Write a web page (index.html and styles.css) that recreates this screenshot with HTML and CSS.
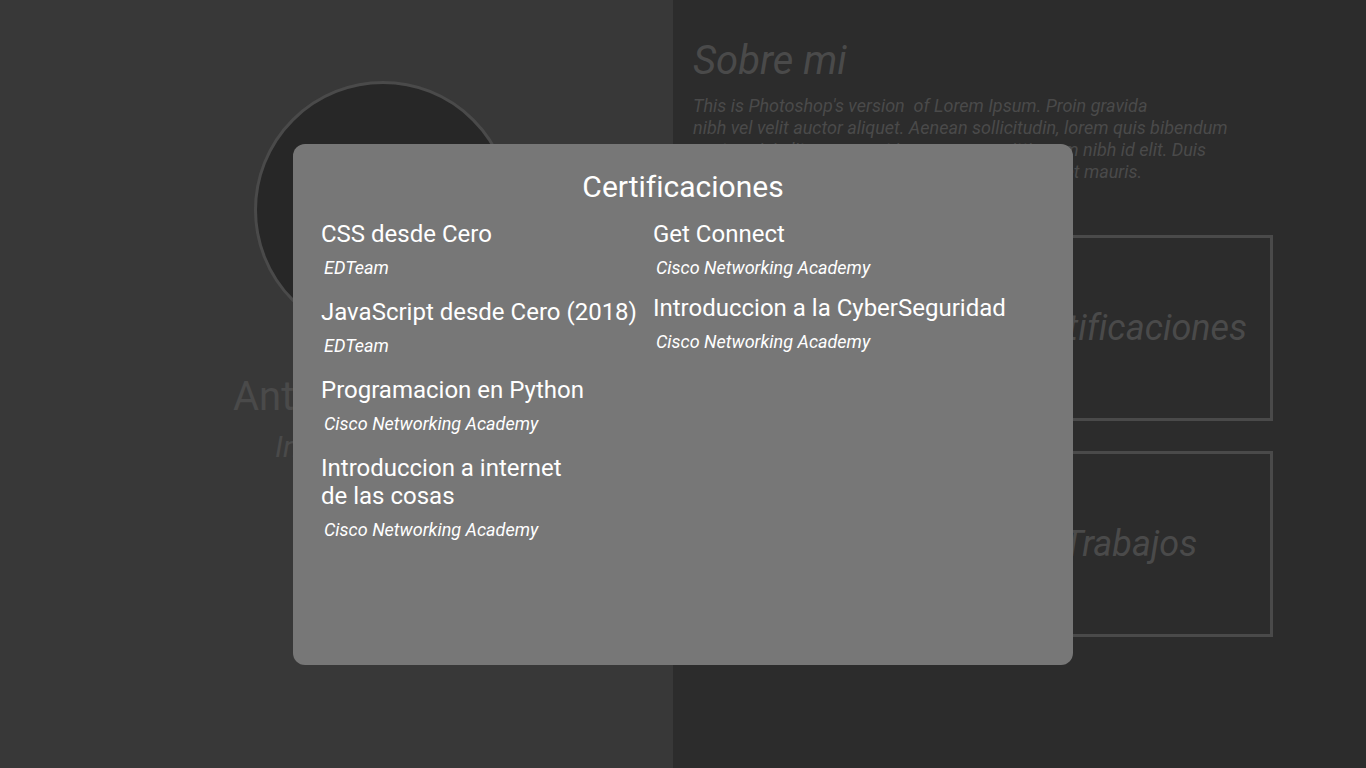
FILE: index.html
```html
<!DOCTYPE html>
<html lang="es">
<head>
<meta charset="utf-8">
<meta name="viewport" content="width=device-width, initial-scale=1">
<title>Certificaciones</title>
<link rel="stylesheet" href="styles.css">
</head>
<body>
<div class="page">
  <aside class="profile">
    <div class="avatar"></div>
    <h1 class="name">Antonio</h1>
    <p class="role">Ingeniero</p>
  </aside>
  <main class="about">
    <h2 class="about-title">Sobre mi</h2>
    <p class="about-text">This is Photoshop's version&nbsp; of Lorem Ipsum. Proin gravida<br>nibh vel velit auctor aliquet. Aenean sollicitudin, lorem quis bibendum<br>auctor, nisi elit consequat ipsum, nec sagittis sem nibh id elit. Duis<br>sed odio sit amet nibh vulputate cursus a sit amet mauris.</p>
    <nav class="cards">
      <button class="card" type="button">Certificaciones</button>
      <button class="card" type="button">Trabajos</button>
    </nav>
  </main>
</div>
<div class="overlay">
  <section class="modal" role="dialog" aria-modal="true" aria-labelledby="modal-title">
    <h2 class="modal-title" id="modal-title">Certificaciones</h2>
    <div class="columns">
      <ul class="list">
        <li class="item"><h3 class="course">CSS desde Cero</h3><p class="issuer">EDTeam</p></li>
        <li class="item"><h3 class="course">JavaScript desde Cero (2018)</h3><p class="issuer">EDTeam</p></li>
        <li class="item"><h3 class="course">Programacion en Python</h3><p class="issuer">Cisco Networking Academy</p></li>
        <li class="item"><h3 class="course">Introduccion a internet<br>de las cosas</h3><p class="issuer">Cisco Networking Academy</p></li>
      </ul>
      <ul class="list list-compact">
        <li class="item"><h3 class="course">Get Connect</h3><p class="issuer">Cisco Networking Academy</p></li>
        <li class="item"><h3 class="course">Introduccion a la CyberSeguridad</h3><p class="issuer">Cisco Networking Academy</p></li>
      </ul>
    </div>
  </section>
</div>
</body>
</html>
```

FILE: styles.css
```css
* {
  box-sizing: border-box;
}

body {
  margin: 0;
  font-family: Roboto, "Liberation Sans", sans-serif;
  font-variant-ligatures: none;
  color: #4a4a4a;
  background: #2c2c2c;
}

h1, h2, h3, p, ul {
  margin: 0;
  padding: 0;
  font-weight: 400;
}

.page {
  display: grid;
  grid-template-columns: 673fr 693fr;
  min-height: 100vh;
}

.profile {
  display: flex;
  flex-direction: column;
  align-items: center;
  padding: 81px 0 0 93px;
  background: #383838;
}

.avatar {
  width: 258px;
  height: 258px;
  border: 3px solid #4a4a4a;
  border-radius: 50%;
  background: #272727;
}

.name {
  width: 300px;
  margin-top: 34px;
  font-size: 40px;
  line-height: 48px;
}

.role {
  width: 216px;
  margin-top: 8px;
  font-size: 30px;
  line-height: 36px;
  font-style: italic;
}

.about {
  padding: 37px 93px 36px 20px;
  background: #2c2c2c;
}

.about-title {
  font-size: 40px;
  line-height: 48px;
  font-style: italic;
}

.about-text {
  margin-top: 10px;
  font-size: 18px;
  line-height: 22px;
  font-style: italic;
  white-space: nowrap;
}

.cards {
  display: grid;
  grid-template-columns: 292px;
  grid-auto-rows: 186px;
  justify-content: end;
  gap: 30px;
  margin-top: 52px;
}

.card {
  padding: 0 0 0 6px;
  border: 3px solid #4a4a4a;
  background: none;
  color: inherit;
  font-family: inherit;
  font-size: 36px;
  line-height: 40px;
  font-style: italic;
  font-variant-ligatures: none;
}

.overlay {
  position: absolute;
  inset: 0;
  display: flex;
  flex-direction: column;
  align-items: center;
  padding: 144px 24px 24px;
}

.modal {
  width: 100%;
  max-width: 780px;
  min-height: 521px;
  padding: 25px 28px;
  border-radius: 12px;
  background: #777;
  color: #fff;
}

.modal-title {
  font-size: 30px;
  line-height: 36px;
  text-align: center;
}

.columns {
  display: grid;
  grid-template-columns: max-content 1fr;
  gap: 16px;
  margin-top: 15px;
}

.list {
  display: flex;
  flex-direction: column;
  gap: 19px;
  list-style: none;
}

.list-compact {
  gap: 15px;
}

.course {
  font-size: 24px;
  line-height: 28px;
}

.issuer {
  margin-top: 9px;
  padding-left: 3px;
  font-size: 18px;
  line-height: 22px;
  font-style: italic;
}
```
